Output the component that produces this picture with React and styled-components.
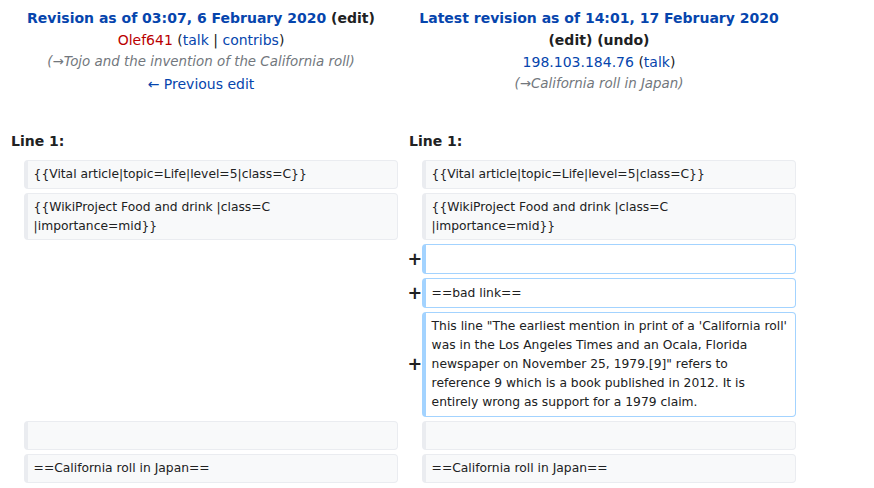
import React from "react";
import styled, { createGlobalStyle } from "styled-components";

const GlobalStyle = createGlobalStyle`
  body {
    margin: 0;
    background: #ffffff;
    color: #202122;
    font-family: "DejaVu Sans", sans-serif;
    font-size: 14px;
  }
`;

const DiffGrid = styled.div`
  box-sizing: border-box;
  width: 800px;
  padding: 3px 4px 4px;
  display: grid;
  grid-template-columns: 2fr 48fr 2fr 48fr;
  column-gap: 4px;
  row-gap: 4px;
`;

const Title = styled.div`
  grid-column: span 2;
  padding: 4px 7px;
  text-align: center;
  line-height: 22px;
`;

const TitleLine = styled.div`
  font-weight: ${(p) => (p.$bold ? "bold" : "normal")};
`;

const Link = styled.span`
  color: ${(p) => (p.$red ? "#ba0000" : "#0645ad")};
`;

const Plain = styled.span`
  color: #202122;
`;

const Comment = styled.div`
  font-style: italic;
  font-size: 13.4px;
  color: #72777d;
`;

const Spacer = styled.div`
  grid-column: 1 / -1;
  height: 19px;
`;

const LineNo = styled.div`
  grid-column: span 2;
  padding: 4px 7px;
  font-weight: bold;
  line-height: 22px;
`;

const Marker = styled.div`
  display: flex;
  align-items: center;
  justify-content: flex-end;
  font-weight: bold;
  font-size: 17.5px;
  margin-right: -4.5px;
`;

const Cell = styled.div`
  box-sizing: border-box;
  border-style: solid;
  border-width: 1px 1px 1px 4px;
  border-radius: 4px;
  border-color: ${(p) => (p.$added ? "#a3d3ff" : "#eaecf0")};
  background: ${(p) => (p.$added ? "#ffffff" : "#f8f9fa")};
  padding: ${(p) => (p.$added ? "4.5px 6px" : "4px 6px")};
  min-height: ${(p) => (p.$added ? "29.8px" : "28.8px")};
  font-size: 12.3px;
  line-height: 18.8px;
  color: #202122;
  white-space: pre-wrap;
  word-wrap: break-word;
`;

const EmptySide = styled.div`
  grid-column: span 2;
`;

function ContextRow({ text }) {
  return (
    <>
      <Marker />
      <Cell>{text}</Cell>
      <Marker />
      <Cell>{text}</Cell>
    </>
  );
}

function AddedRow({ text }) {
  return (
    <>
      <EmptySide />
      <Marker>+</Marker>
      <Cell $added>{text}</Cell>
    </>
  );
}

export default function App() {
  return (
    <>
      <GlobalStyle />
      <DiffGrid>
        <Title>
          <TitleLine $bold>
            <Link>Revision as of 03:07, 6 February 2020</Link> <Plain>(edit)</Plain>
          </TitleLine>
          <TitleLine>
            <Link $red>Olef641</Link> (<Link>talk</Link> | <Link>contribs</Link>)
          </TitleLine>
          <Comment>(→Tojo and the invention of the California roll)</Comment>
          <TitleLine>
            <Link>← Previous edit</Link>
          </TitleLine>
        </Title>
        <Title>
          <TitleLine $bold>
            <Link>Latest revision as of 14:01, 17 February 2020</Link>
          </TitleLine>
          <TitleLine $bold>
            <Plain>(edit) (undo)</Plain>
          </TitleLine>
          <TitleLine>
            <Link>198.103.184.76</Link> (<Link>talk</Link>)
          </TitleLine>
          <Comment>(→California roll in Japan)</Comment>
        </Title>
        <Spacer />
        <LineNo>Line 1:</LineNo>
        <LineNo>Line 1:</LineNo>
        <ContextRow text="{{Vital article|topic=Life|level=5|class=C}}" />
        <ContextRow text="{{WikiProject Food and drink |class=C |importance=mid}}" />
        <AddedRow text="" />
        <AddedRow text="==bad link==" />
        <AddedRow text={`This line "The earliest mention in print of a 'California roll' was in the Los Angeles Times and an Ocala, Florida newspaper on November 25, 1979.[9]" refers to reference 9 which is a book published in 2012. It is entirely wrong as support for a 1979 claim.`} />
        <ContextRow text="" />
        <ContextRow text="==California roll in Japan==" />
      </DiffGrid>
    </>
  );
}
